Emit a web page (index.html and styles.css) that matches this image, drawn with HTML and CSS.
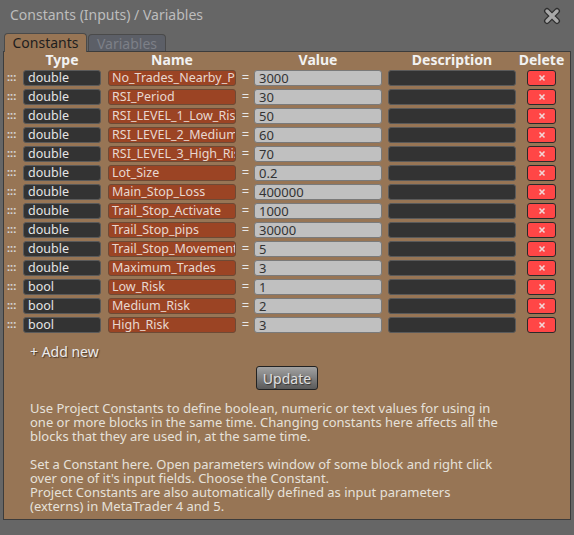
FILE: index.html
```html
<!DOCTYPE html>
<html>
<head>
	<meta charset="UTF-8">
	<title>Constants (Inputs) / Variables</title>
	<link rel="stylesheet" href="styles.css">
</head>
<body>
<div id="win">
    <div class="titlebar">
        <span class="title">Constants (Inputs) / Variables</span>
        <svg class="close" width="18" height="18" viewBox="0 0 18 18">
            <path d="M4 4 L14 14 M14 4 L4 14" stroke="#2e2e2e" stroke-width="6" stroke-linecap="round"/>
            <path d="M4 4 L14 14 M14 4 L4 14" stroke="#a8a8a8" stroke-width="3.4" stroke-linecap="round"/>
        </svg>
    </div>

    <div class="tabs">
        <span class="tab on">Constants</span>
        <span class="tab">Variables</span>
    </div>

    <div class="panel">
        <div class="row head">
            <span class="c-type">Type</span>
            <span class="c-name">Name</span>
            <span class="c-val">Value</span>
            <span class="c-desc">Description</span>
            <span class="c-del">Delete</span>
        </div>

        <div id="list"></div>

        <div class="add">+ Add new</div>
        <div class="actions"><button class="update">Update</button></div>

        <p class="help">
            Use Project Constants to define boolean, numeric or text values for using in<br>
            one or more blocks in the same time. Changing constants here affects all the<br>
            blocks that they are used in, at the same time.<br>
            <br>
            Set a Constant here. Open parameters window of some block and right click<br>
            over one of it's input fields. Choose the Constant.<br>
            Project Constants are also automatically defined as input parameters<br>
            (externs) in MetaTrader 4 and 5.
        </p>
    </div>
</div>

<script>
	var consts = [
		['double','No_Trades_Nearby_Pips','3000'],
		['double','RSI_Period','30'],
		['double','RSI_LEVEL_1_Low_Risk','50'],
		['double','RSI_LEVEL_2_Medium_Risk','60'],
		['double','RSI_LEVEL_3_High_Risk','70'],
		['double','Lot_Size','0.2'],
		['double','Main_Stop_Loss','400000'],
		['double','Trail_Stop_Activate','1000'],
		['double','Trail_Stop_pips','30000'],
		['double','Trail_Stop_Movement','5'],
		['double','Maximum_Trades','3'],
		['bool','Low_Risk','1'],
		['bool','Medium_Risk','2'],
		['bool','High_Risk','3']
	];
	var list = document.getElementById('list');
	var str = '';
	for(var i=0;i<consts.length;i++){
		str += '<div class="row">'
			+ '<span class="grip">:::</span>'
			+ '<span class="box c-type type">' + consts[i][0] + '</span>'
			+ '<span class="box c-name name">' + consts[i][1] + '</span>'
			+ '<span class="c-eq">=</span>'
			+ '<span class="box c-val val">' + consts[i][2] + '</span>'
			+ '<span class="box c-desc desc"></span>'
			+ '<span class="c-del del"><svg width="8" height="8" viewBox="0 0 8 8"><path d="M1.5 1.5 L6.5 6.5 M6.5 1.5 L1.5 6.5" stroke="#f2d6d6" stroke-width="1.6"/></svg></span>'
			+ '</div>';
	}
	list.innerHTML = str;
</script>

</body>
</html>
```

FILE: styles.css
```css
body{
    margin: 0;
    background-color: #666666;
    font-family: "Noto Sans", "Open Sans", sans-serif;
}
#win{
    width: 574px;
    height: 535px;
}
.titlebar{
    height: 33px;
    position: relative;
}
.title{
    display: block;
    padding: 5px 0 0 10px;
    font-size: 14px;
    line-height: 20px;
    color: #bdbdbd;
}
.close{
    position: absolute;
    left: 543px;
    top: 7px;
}
.tabs{
    display: flex;
    align-items: flex-end;
    height: 18px;
    margin-left: 4px;
}
.tab{
    width: 76px;
    height: 16px;
    margin-left: 1px;
    border: 1px solid #4a4a4a;
    border-bottom: none;
    border-radius: 4px 4px 0 0;
    background-color: #5c5f67;
    color: #7d8088;
    font-size: 14px;
    line-height: 17px;
    text-align: center;
}
.tab.on{
    width: 81px;
    height: 18px;
    margin-left: 0;
    margin-bottom: -1px;
    background-color: #977555;
    color: #1e1e1e;
    position: relative;
    z-index: 1;
}
.panel{
    margin: 0 3px;
    height: 467px;
    border: 1px solid #3c3c3c;
    background-color: #977555;
}
.row{
    display: grid;
    grid-template-columns: 19px 78px 7px 128px 18px 128px 6px 128px 11px 29px;
    height: 16px;
    margin-bottom: 3px;
    font-size: 12.5px;
    line-height: 14px;
}
.head{
    height: 16px;
    margin-bottom: 2px;
    font-size: 14px;
    font-weight: bold;
    line-height: 16px;
    color: #f2f2f2;
}
.head span{
    display: flex;
    justify-content: center;
    white-space: nowrap;
}
.c-type{ grid-column: 2; }
.c-name{ grid-column: 4; }
.c-eq{ grid-column: 5; }
.c-val{ grid-column: 6; }
.c-desc{ grid-column: 8; }
.c-del{ grid-column: 10; }

.grip{
    grid-column: 1;
    padding-left: 3px;
    color: #d8d8d8;
    font-size: 11px;
    font-weight: bold;
}
.box{
    border: 1px solid #5a5a5a;
    border-radius: 3px;
    padding: 0 4px;
    overflow: hidden;
    white-space: nowrap;
}
.type{
    background-color: #333333;
    color: #e4e4e4;
}
.name{
    padding-left: 3px;
    background-color: #9b4424;
    border-color: #6e4a35;
    color: #e8d8d0;
}
.c-eq{
    padding-left: 1px;
    color: #e8e8e8;
    font-size: 13px;
    text-align: center;
}
.val{
    background-color: #c0c0c0;
    border-color: #7a7a7a;
    color: #333333;
    font-size: 13px;
}
.desc{
    background-color: #333333;
}
.del{
    display: flex;
    align-items: center;
    justify-content: center;
    background-color: #ff4646;
    border: 1px solid #2a2a2a;
    border-radius: 3px;
}
.add{
    margin: 9px 0 0 26px;
    font-size: 14px;
    line-height: 20px;
    color: #ececec;
    text-shadow: 1px 1px 1px #4a3a2a;
}
.actions{
    display: flex;
    justify-content: center;
    margin-top: 4px;
}
.update{
    width: 62px;
    height: 24px;
    padding: 0;
    border: 1px solid #222222;
    border-radius: 3px;
    background: linear-gradient(#a2a2a2, #5a5a5a);
    color: #e0e0e0;
    font-family: "Noto Sans", sans-serif;
    font-size: 14px;
    text-shadow: 1px 1px 1px #333333;
}
.help{
    margin: 11px 0 0 26px;
    font-size: 13px;
    line-height: 14px;
    color: #e6e1da;
    white-space: nowrap;
}
```
